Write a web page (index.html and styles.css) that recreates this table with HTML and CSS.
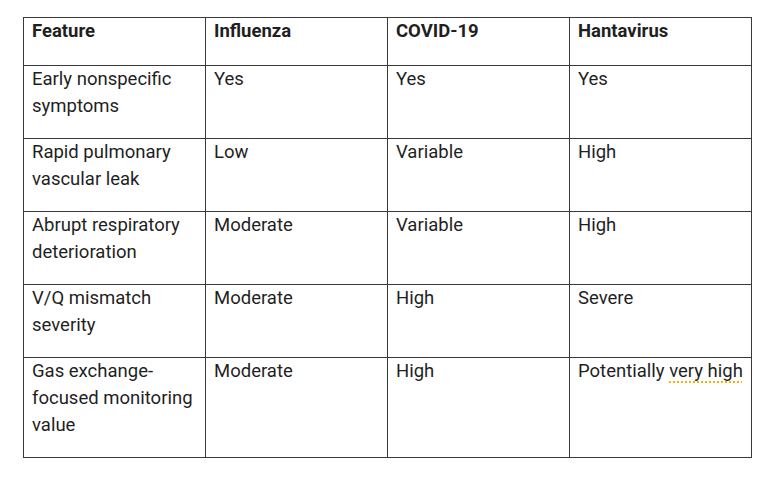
FILE: index.html
```html
<!DOCTYPE html>
<html>
<head>
<meta charset="utf-8">
<link rel="stylesheet" href="styles.css">
</head>
<body>
<table class="cmp">
  <colgroup><col class="c"><col class="c"><col class="c"><col class="c"></colgroup>
  <thead>
    <tr class="head"><th>Feature</th><th>Influenza</th><th>COVID-19</th><th>Hantavirus</th></tr>
  </thead>
  <tbody>
    <tr><td>Early nonspecific symptoms</td><td>Yes</td><td>Yes</td><td>Yes</td></tr>
    <tr><td>Rapid pulmonary vascular leak</td><td>Low</td><td>Variable</td><td>High</td></tr>
    <tr><td>Abrupt respiratory deterioration</td><td>Moderate</td><td>Variable</td><td>High</td></tr>
    <tr><td>V/Q mismatch severity</td><td>Moderate</td><td>High</td><td>Severe</td></tr>
    <tr><td>Gas exchange-focused monitoring value</td><td>Moderate</td><td>High</td><td>Potentially <span class="spell">very high</span></td></tr>
  </tbody>
</table>
</body>
</html>
```
FILE: styles.css
```css
html, body { margin: 0; background: #fff; }
body { padding: 17px 0 0 23px; font-family: Roboto, "Noto Sans", sans-serif; color: #1f1f1f; }
.cmp { border-collapse: collapse; table-layout: fixed; width: 729px; font-size: 18.5px; line-height: 27px; }
.cmp .c { width: 182px; }
.cmp th, .cmp td { border: 1px solid #3a3a3a; padding: 0 7px 18px 8px; vertical-align: top; text-align: left; }
.cmp th { font-weight: 700; height: 48px; padding-bottom: 0; box-sizing: border-box; }
.cmp td { height: 72px; box-sizing: border-box; }
.spell { text-decoration: underline dotted #f4b400; text-decoration-thickness: 2px; text-underline-offset: 4px; }
```
